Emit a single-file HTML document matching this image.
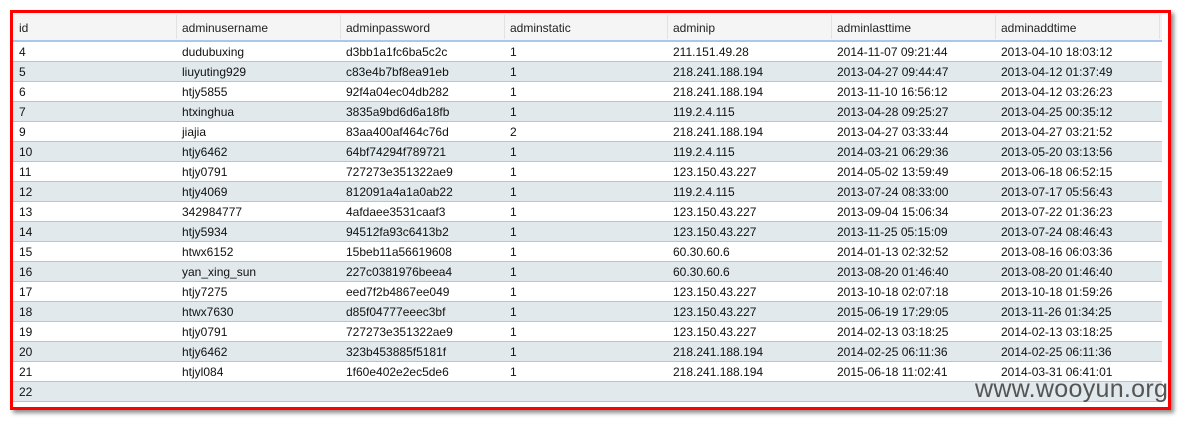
<!DOCTYPE html><html><head><style>
body{margin:0;width:1181px;height:421px;background:#fff;position:relative;overflow:hidden;font-family:"Liberation Sans",sans-serif;font-size:12px;color:#111}
.frame{position:absolute;left:10px;top:10px;width:1155px;height:394px;border:3px solid #f00;box-shadow:3px 3px 4px rgba(0,0,0,.45)}
.hdr{position:absolute;left:13px;top:13px;width:1149px;height:27px;background:#f5f5f5;border-bottom:2px solid #a9c6ee}
.row{position:absolute;left:13px;width:1149px;height:19px;border-bottom:1px solid #a9c6ee}
.c{position:absolute;top:0;line-height:20px;white-space:nowrap}
.hdr .c{line-height:30px;color:#222}
.sep{position:absolute;top:2px;width:1px;height:24px;background:#e2e2e2}
.wm{position:absolute;left:975px;top:375px;font-size:25px;color:#555;letter-spacing:0.3px}
</style></head><body>
<div class="frame"></div>
<div class="hdr">
<span class="c" style="left:6px">id</span><span class="c" style="left:169px">adminusername</span><span class="c" style="left:333px">adminpassword</span><span class="c" style="left:497px">adminstatic</span><span class="c" style="left:660px">adminip</span><span class="c" style="left:824px">adminlasttime</span><span class="c" style="left:988px">adminaddtime</span>
<div class="sep" style="left:163px"></div><div class="sep" style="left:327px"></div><div class="sep" style="left:491px"></div><div class="sep" style="left:654px"></div><div class="sep" style="left:818px"></div><div class="sep" style="left:982px"></div><div class="sep" style="left:1146px"></div>
</div>
<div id="rows"></div>
<script>
var d=[["4","dudubuxing","d3bb1a1fc6ba5c2c","1","211.151.49.28","2014-11-07 09:21:44","2013-04-10 18:03:12"],
["5","liuyuting929","c83e4b7bf8ea91eb","1","218.241.188.194","2013-04-27 09:44:47","2013-04-12 01:37:49"],
["6","htjy5855","92f4a04ec04db282","1","218.241.188.194","2013-11-10 16:56:12","2013-04-12 03:26:23"],
["7","htxinghua","3835a9bd6d6a18fb","1","119.2.4.115","2013-04-28 09:25:27","2013-04-25 00:35:12"],
["9","jiajia","83aa400af464c76d","2","218.241.188.194","2013-04-27 03:33:44","2013-04-27 03:21:52"],
["10","htjy6462","64bf74294f789721","1","119.2.4.115","2014-03-21 06:29:36","2013-05-20 03:13:56"],
["11","htjy0791","727273e351322ae9","1","123.150.43.227","2014-05-02 13:59:49","2013-06-18 06:52:15"],
["12","htjy4069","812091a4a1a0ab22","1","119.2.4.115","2013-07-24 08:33:00","2013-07-17 05:56:43"],
["13","342984777","4afdaee3531caaf3","1","123.150.43.227","2013-09-04 15:06:34","2013-07-22 01:36:23"],
["14","htjy5934","94512fa93c6413b2","1","123.150.43.227","2013-11-25 05:15:09","2013-07-24 08:46:43"],
["15","htwx6152","15beb11a56619608","1","60.30.60.6","2014-01-13 02:32:52","2013-08-16 06:03:36"],
["16","yan_xing_sun","227c0381976beea4","1","60.30.60.6","2013-08-20 01:46:40","2013-08-20 01:46:40"],
["17","htjy7275","eed7f2b4867ee049","1","123.150.43.227","2013-10-18 02:07:18","2013-10-18 01:59:26"],
["18","htwx7630","d85f04777eeec3bf","1","123.150.43.227","2015-06-19 17:29:05","2013-11-26 01:34:25"],
["19","htjy0791","727273e351322ae9","1","123.150.43.227","2014-02-13 03:18:25","2014-02-13 03:18:25"],
["20","htjy6462","323b453885f5181f","1","218.241.188.194","2014-02-25 06:11:36","2014-02-25 06:11:36"],
["21","htjyl084","1f60e402e2ec5de6","1","218.241.188.194","2015-06-18 11:02:41","2014-03-31 06:41:01"],
["22","","","","","",""]];
var L=[6,169,333,497,660,824,988],h="";
d.forEach(function(r,i){h+='<div class="row" style="top:'+(42+i*20)+'px;background:'+(i%2?'#e1e9ec':'#fff')+'">';
r.forEach(function(v,j){h+='<span class="c" style="left:'+L[j]+'px">'+v+'</span>'});h+='</div>'});
document.getElementById('rows').innerHTML=h;
</script>
<div class="wm">www.wooyun.org</div>
</body></html>
